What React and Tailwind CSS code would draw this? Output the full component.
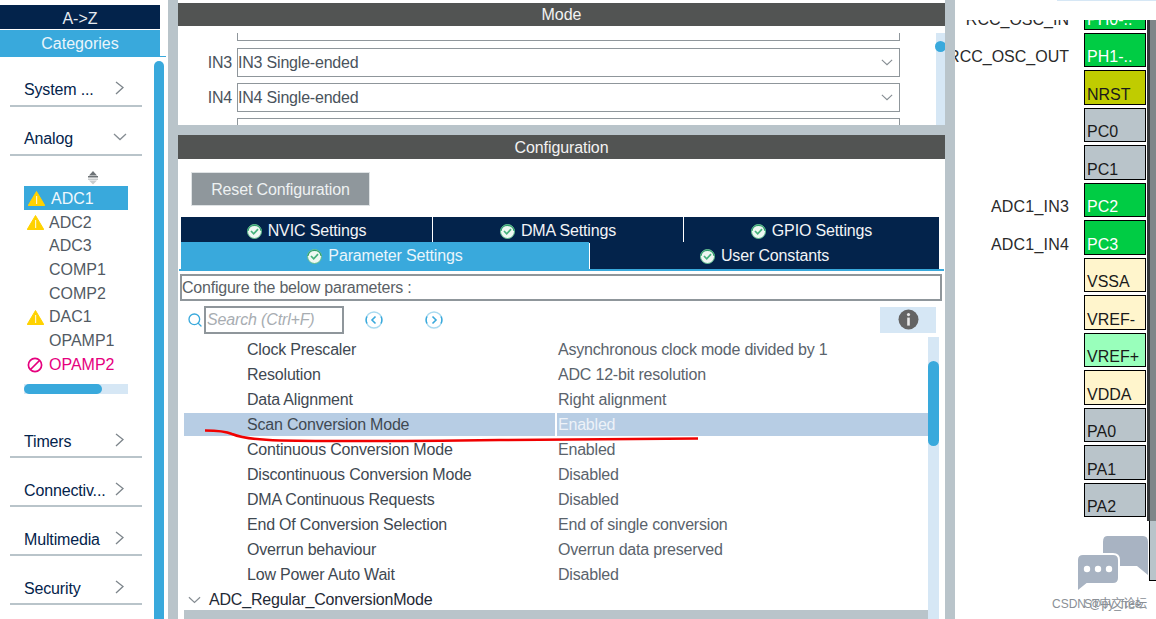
import React from 'react';
import { Search } from 'lucide-react';

const categoriesTop = [
  { name: 'System ...', open: false },
  { name: 'Analog', open: true },
];
const categoriesBottom = ['Timers', 'Connectiv...', 'Multimedia', 'Security'];

const analogItems = [
  { name: 'ADC1', icon: 'warn', selected: true },
  { name: 'ADC2', icon: 'warn' },
  { name: 'ADC3' },
  { name: 'COMP1' },
  { name: 'COMP2' },
  { name: 'DAC1', icon: 'warn' },
  { name: 'OPAMP1' },
  { name: 'OPAMP2', icon: 'ban' },
];

const params = [
  ['Clock Prescaler', 'Asynchronous clock mode divided by 1'],
  ['Resolution', 'ADC 12-bit resolution'],
  ['Data Alignment', 'Right alignment'],
  ['Scan Conversion Mode', 'Enabled', true],
  ['Continuous Conversion Mode', 'Enabled'],
  ['Discontinuous Conversion Mode', 'Disabled'],
  ['DMA Continuous Requests', 'Disabled'],
  ['End Of Conversion Selection', 'End of single conversion'],
  ['Overrun behaviour', 'Overrun data preserved'],
  ['Low Power Auto Wait', 'Disabled'],
];

const pins = [
  { name: 'PH0-..', label: 'RCC_OSC_IN', bg: 'bg-[#00cc44]', text: 'text-white' },
  { name: 'PH1-..', label: 'RCC_OSC_OUT', bg: 'bg-[#00cc44]', text: 'text-white' },
  { name: 'NRST', bg: 'bg-[#c0cc00]', text: 'text-[#1a1a1a]' },
  { name: 'PC0', bg: 'bg-[#b9c4ca]', text: 'text-[#1a1a1a]' },
  { name: 'PC1', bg: 'bg-[#b9c4ca]', text: 'text-[#1a1a1a]' },
  { name: 'PC2', label: 'ADC1_IN3', wide: true, bg: 'bg-[#00cc44]', text: 'text-white' },
  { name: 'PC3', label: 'ADC1_IN4', wide: true, bg: 'bg-[#00cc44]', text: 'text-white' },
  { name: 'VSSA', bg: 'bg-[#fff5cc]', text: 'text-[#1a1a1a]' },
  { name: 'VREF-', bg: 'bg-[#fff5cc]', text: 'text-[#1a1a1a]' },
  { name: 'VREF+', bg: 'bg-[#99ffbb]', text: 'text-[#1a1a1a]' },
  { name: 'VDDA', bg: 'bg-[#fff5cc]', text: 'text-[#1a1a1a]' },
  { name: 'PA0', bg: 'bg-[#b9c4ca]', text: 'text-[#1a1a1a]' },
  { name: 'PA1', bg: 'bg-[#b9c4ca]', text: 'text-[#1a1a1a]' },
  { name: 'PA2', bg: 'bg-[#b9c4ca]', text: 'text-[#1a1a1a]' },
];

function ChevronRight() {
  return (
    <svg width="9" height="14" viewBox="0 0 9 14" fill="none" stroke="#7d858b" strokeWidth="1.3">
      <path d="M1 1 L8 6.5 L1 13" />
    </svg>
  );
}

function ChevronDown({ w = 14, h = 8 }) {
  return (
    <svg width={w} height={h} viewBox="0 0 14 8" fill="none" stroke="#868d93" strokeWidth="1.3">
      <path d="M1 1 L7 6.5 L13 1" />
    </svg>
  );
}

function WarnIcon() {
  return (
    <svg width="17" height="15" viewBox="0 0 17 15" className="shrink-0">
      <path d="M8.5 0.5 L16.8 14.5 L0.2 14.5 Z" fill="#ffd200" stroke="#ffd200" strokeLinejoin="round" />
      <rect x="8" y="5" width="1.2" height="8" fill="#fff6c8" />
    </svg>
  );
}

function BanIcon() {
  return (
    <svg width="16" height="16" viewBox="0 0 16 16" fill="none" stroke="#e6007e" strokeWidth="1.7" className="shrink-0">
      <circle cx="8" cy="8" r="6.6" />
      <path d="M3.5 12.5 L12.5 3.5" />
    </svg>
  );
}

function CheckBadge() {
  return (
    <svg width="15" height="15" viewBox="0 0 15 15" fill="none" className="shrink-0">
      <circle cx="7.5" cy="7.5" r="7" fill="#eef8f2" stroke="#5fbd8c" strokeWidth="1" />
      <path d="M0.9 7 A6.7 6.7 0 0 1 14.1 7" stroke="#2f9e6b" strokeWidth="1.2" />
      <path d="M4 7 L6.7 9.8 L11 5.2" stroke="#45b27c" strokeWidth="1.7" />
    </svg>
  );
}

function NavCircle({ dir }) {
  return (
    <svg width="18" height="18" viewBox="0 0 18 18" fill="none">
      <circle cx="9" cy="9" r="8" stroke="#a9daf0" strokeWidth="1.4" />
      <path d="M2 5.5 A8 8 0 0 0 2 12.5 M16 5.5 A8 8 0 0 1 16 12.5" stroke="#39a9dc" strokeWidth="1.4" />
      <path d={dir === 'left' ? 'M10.5 5.5 L7 9 L10.5 12.5' : 'M7.5 5.5 L11 9 L7.5 12.5'} stroke="#39a9dc" strokeWidth="1.6" />
    </svg>
  );
}

function InfoIcon() {
  return (
    <svg width="21" height="21" viewBox="0 0 21 21">
      <circle cx="10.5" cy="10.5" r="10" fill="#646464" />
      <circle cx="10.5" cy="5.6" r="1.6" fill="#e8e8e8" />
      <rect x="9.2" y="8.6" width="2.6" height="8" fill="#e8e8e8" />
    </svg>
  );
}

function Tab({ active, tall, children }) {
  return (
    <div className={`flex items-center justify-center gap-[6px] text-[16px] tracking-[-0.15px] ${tall ? 'pt-px' : 'pt-[2px]'} ${active ? 'bg-[#39a9dc] text-[#eaf5fb]' : 'bg-[#03234b] text-[#f2f4f7]'}`}>
      <CheckBadge />
      <span>{children}</span>
    </div>
  );
}

function CategoryRow({ name, open, low }) {
  return (
    <div className={`mt-[17px] ml-[10px] flex h-[32px] w-[132px] items-center justify-between border-b-2 border-[#b9c4ca] pr-[18px] pl-[14px] text-[16px] tracking-[-0.15px] text-[#03234b] ${low ? 'pt-[3px]' : ''}`}>
      <span className="whitespace-nowrap">{name}</span>
      {open ? <span className="-mt-[4px] -mr-[3px]"><ChevronDown /></span> : <span className="-mt-[4px]"><ChevronRight /></span>}
    </div>
  );
}

function Sidebar() {
  return (
    <div className="flex h-full w-[168px] shrink-0 flex-col pt-[5px]">
      <div className="flex h-[24px] w-[160px] items-center justify-center bg-[#03234b] pt-[3px] text-[16px] text-[#e6eaf0]">A-&gt;Z</div>
      <div className="mt-px flex h-[26px] w-[160px] items-center justify-center bg-[#39a9dc] pt-[2px] text-[16px] text-[#eaf5fb]">Categories</div>
      <div className="h-[2px] w-[166px] border-t border-[#39a9dc]" />
      <div className="flex min-h-0 flex-1">
        <div className="w-[154px] shrink-0">
          {categoriesTop.map((c) => (
            <CategoryRow key={c.name} {...c} />
          ))}
          <div className="mt-[14px] flex justify-center pl-[31px]">
            <svg width="12" height="15" viewBox="0 0 12 15">
              <path d="M6 1 L10 5.5 L2 5.5 Z" fill="#6d7377" />
              <rect x="1" y="6" width="10" height="1.5" fill="#6d7377" />
              <rect x="1" y="8.5" width="10" height="1.5" fill="#c9cccd" />
              <path d="M6 14.5 L10 10.5 L2 10.5 Z" fill="#c9cccd" />
            </svg>
          </div>
          <div className="mt-px ml-[24px] w-[104px] text-[16px]">
            {analogItems.map((item) => (
              <div
                key={item.name}
                className={`flex h-[23.7px] items-center pt-[2px] ${item.selected ? 'bg-[#39a9dc] pl-[4px] text-[#f1f8fc]' : 'pl-[3px]'} ${item.icon === 'ban' ? 'text-[#e6007e]' : ''} ${!item.selected && item.icon !== 'ban' ? 'text-[#525a63]' : ''}`}
              >
                <span className={`flex ${item.selected ? 'w-[23px]' : 'w-[22px]'}`}>
                  {item.icon === 'warn' && <WarnIcon />}
                  {item.icon === 'ban' && <BanIcon />}
                </span>
                <span>{item.name}</span>
              </div>
            ))}
            <div className="mt-[8px] h-[10px] w-[104px] bg-[#d6e7f5]">
              <div className="h-[10px] w-[78px] rounded-full bg-[#39a9dc]" />
            </div>
          </div>
          <div className="mt-[32px]">
            {categoriesBottom.map((name) => (
              <CategoryRow key={name} name={name} low />
            ))}
          </div>
        </div>
        <div className="mt-[3px] h-full w-[10px] rounded-t-full bg-[#39a9dc]" />
      </div>
    </div>
  );
}

function ModePanel() {
  return (
    <div className="flex h-[99px] overflow-hidden bg-white">
      <div className="w-[758px] shrink-0 text-[16px] tracking-[-0.2px] text-[#4a535c]">
        <div className="mt-[7px] ml-[59px] h-[8px] w-[663px] border-x border-b border-[#8f969b]" />
        {['IN3', 'IN4'].map((name, i) => (
          <div key={name} className={`flex h-[29px] items-center ${i === 0 ? 'mt-[7px]' : 'mt-[6px]'}`}>
            <span className="w-[54px] text-right">{name}</span>
            <div className="ml-[5px] flex h-[29px] w-[663px] items-center justify-between border border-[#8f969b] pr-[6px]">
              <span>{name} Single-ended</span>
              <ChevronDown w={12} h={7} />
            </div>
          </div>
        ))}
        <div className="mt-[6px] ml-[59px] h-[20px] w-[663px] border-x border-t border-[#8f969b]" />
      </div>
      <div className="mt-[7px] w-[9px] bg-[#d6e7f5]">
        <div className="mt-[8px] -ml-px h-[11px] w-[11px] rounded-full bg-[#39a9dc]" />
      </div>
    </div>
  );
}

function ConfigPanel() {
  return (
    <div className="flex min-h-0 flex-1 flex-col bg-white">
      <div className="mt-[13px] ml-[13px] flex h-[34px] w-[179px] items-center justify-center border border-[#dfe3e5] bg-[#8f979c] pt-px text-[16px] tracking-[-0.15px] text-[#eef1f2]">
        Reset Configuration
      </div>
      <div className="mt-[11px] ml-[3px] w-[758px]">
        <div className="grid h-[24px] grid-cols-[251px_250px_255px] gap-x-px">
          <Tab>NVIC Settings</Tab>
          <Tab>DMA Settings</Tab>
          <Tab>GPIO Settings</Tab>
        </div>
        <div className="mt-px grid h-[27px] grid-cols-[408px_349px] gap-x-px">
          <Tab active tall>Parameter Settings</Tab>
          <Tab tall>User Constants</Tab>
        </div>
      </div>
      <div className="ml-[1px] h-[2px] w-[765px] bg-[#39a9dc]" />
      <div className="mt-[3px] ml-[2px] flex h-[27px] w-[762px] items-center border-2 border-[#8f969b] text-[16px] tracking-[-0.22px] text-[#5a5f66]">
        Configure the below parameters :
      </div>
      <div className="mt-[4px] ml-[9px] flex h-[29px] items-center">
        <Search size={16} color="#39a9dc" strokeWidth={2} className="shrink-0" />
        <div className="ml-px flex h-[28px] w-[140px] items-center border-2 border-[#8f969b] pl-px text-[16px] tracking-[-0.15px] text-[#a8adb2] italic">
          Search (Ctrl+F)
        </div>
        <div className="ml-[21px]"><NavCircle dir="left" /></div>
        <div className="ml-[42px]"><NavCircle dir="right" /></div>
        <div className="ml-[437px] flex h-[26px] w-[56px] items-center justify-center bg-[#d6e7f5]">
          <InfoIcon />
        </div>
      </div>
      <div className="mt-[3px] flex min-h-0 flex-1 pl-[6px]">
        <div className="flex w-[744px] flex-col text-[16px] tracking-[-0.2px]">
          {params.map(([name, value, selected]) => (
            <div key={name} className="flex h-[25px] gap-[2px] py-px">
              <div className={`flex w-[371px] items-center pl-[63px] text-[#3f4952] ${selected ? 'bg-[#b7cde4]' : ''}`}>{name}</div>
              <div className={`flex w-[371px] items-center pl-px ${selected ? 'bg-[#b7cde4] text-[#edf2f8]' : 'text-[#5a636c]'}`}>{value}</div>
            </div>
          ))}
          <div className="flex h-[23px] items-center gap-[8px] pt-[2px] pl-[4px] text-[#1f2a36]">
            <ChevronDown w={13} h={8} />
            <span>ADC_Regular_ConversionMode</span>
          </div>
          <div className="flex-1 bg-[#b9c4ca]" />
        </div>
        <div className="w-[11px] bg-[#d6e7f5]">
          <div className="mt-[24px] h-[85px] w-[11px] rounded-full bg-[#39a9dc]" />
        </div>
      </div>
    </div>
  );
}

function PinView() {
  return (
    <div className="flex min-w-0 flex-1 flex-col bg-white">
      <div className="ml-[102px] h-px bg-[#d6e7f5]" />
      <div className="mt-[19px] flex min-h-0 flex-1">
        <div className="h-[501px] w-[191px] shrink-0 overflow-hidden">
          <div className="-mt-[25px] flex flex-col gap-[3px]">
            {pins.map((p) => (
              <div key={p.name} className="flex h-[34.5px] justify-end">
                {p.label && <span className={`mt-auto mb-px pr-[15px] text-[16px] leading-[18px] whitespace-nowrap text-[#2a2a2a] ${p.wide ? 'tracking-[0.2px]' : ''}`}>{p.label}</span>}
                <div className={`flex h-full w-[62px] shrink-0 items-end border border-black pl-[2px] text-[16px] leading-[18px] ${p.bg} ${p.text}`}>
                  {p.name}
                </div>
              </div>
            ))}
          </div>
        </div>
        <div className="w-[10px] pl-px">
          <div className="h-[501px] border-l-[3px] border-[#333638] bg-[#7f8689]" />
          <div className="ml-[2px] h-[60px] border-b border-l border-black bg-[#b9c4ca]" />
        </div>
      </div>
    </div>
  );
}

export default function App() {
  return (
    <div className="relative flex h-[619px] w-[1156px] overflow-hidden bg-white font-['Liberation_Sans',Arial,sans-serif]">
      <Sidebar />
      <div className="h-full w-[10px] shrink-0 bg-[#b9c4ca]" />
      <div className="flex h-full w-[767px] shrink-0 flex-col bg-[#b9c4ca]">
        <div className="h-[3px] bg-white" />
        <div className="flex h-[23px] items-center justify-center bg-[#525453] text-[16px] text-[#f2f2f2]">Mode</div>
        <ModePanel />
        <div className="h-[10px] shrink-0" />
        <div className="flex h-[24px] shrink-0 items-center justify-center bg-[#525453] pt-[2px] text-[16px] tracking-[-0.1px] text-[#f2f2f2]">Configuration</div>
        <ConfigPanel />
      </div>
      <div className="h-full w-[10px] shrink-0 bg-[#b9c4ca]" />
      <PinView />

      {/* red hand-drawn underline on top of the table */}
      <svg className="pointer-events-none absolute top-0 left-0" width="1156" height="619" fill="none">
        <path d="M205 430.5 C215 430.5 225 431 232 434 C242 438 258 440 280 440.5 C340 441.5 420 441 500 440 C570 439.5 640 439 698 438.5" stroke="#f00000" strokeWidth="2.5" />
      </svg>

      {/* watermark */}
      <div className="pointer-events-none absolute top-[536px] left-[1052px] h-[76px] w-[100px] text-[12px] text-[#8a8f96]">
        <svg className="absolute top-0 left-[25px]" width="72" height="56" viewBox="0 0 72 56">
          <path d="M30 0 H66 Q71 0 71 6 V39 L60 30 H26 V6 Q26 0 30 0 Z" fill="#a8b3c2" />
          <path d="M6 18 H36 Q42 18 42 24 V42 Q42 48 36 48 H10 L0 56 V24 Q0 18 6 18 Z" fill="#a8b3c2" stroke="#fff" strokeWidth="2" />
          <circle cx="10" cy="33" r="3.2" fill="#fff" />
          <circle cx="21" cy="33" r="3.2" fill="#fff" />
          <circle cx="32" cy="33" r="3.2" fill="#fff" />
        </svg>
        <span className="absolute top-[59px] left-0 whitespace-nowrap">CSDN @py_free</span>
        <span className="absolute top-[59px] left-[32px] whitespace-nowrap font-['Liberation_Sans','Noto_Sans_CJK_SC',sans-serif]">ST中文论坛</span>
      </div>
    </div>
  );
}
